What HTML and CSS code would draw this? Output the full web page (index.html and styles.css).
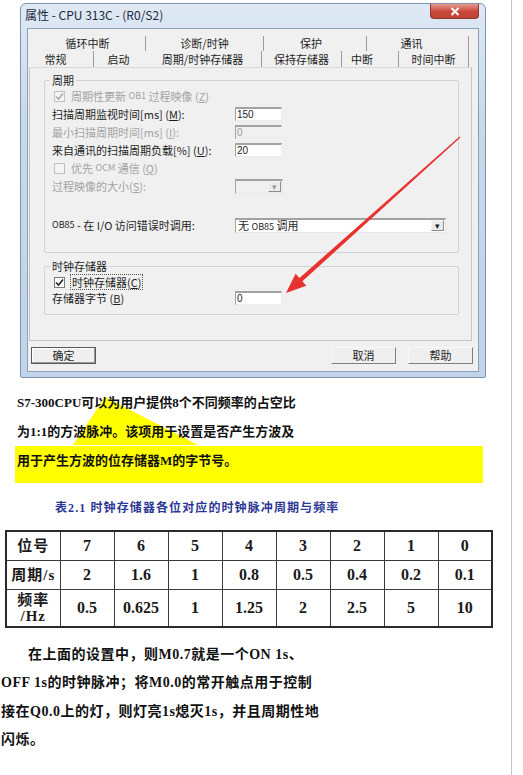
FILE: index.html
```html
<!DOCTYPE html>
<html lang="zh-CN">
<head>
<meta charset="utf-8">
<link rel="stylesheet" href="styles.css">
</head>
<body>
<div class="page">
  <div class="dialog">
    <div class="titlebar">
      <span class="title">属性 - CPU 313C - (R0/S2)</span>
      <span class="close"><svg width="10" height="9" viewBox="0 0 10 9"><path d="M1.5 1 L8.5 8 M8.5 1 L1.5 8" stroke="#fff" stroke-width="2"/></svg></span>
    </div>
    <div class="client">
      <div class="tabs">
        <div class="tabrow">
          <span class="tab w116">循环中断</span>
          <span class="tab w118">诊断/时钟</span>
          <span class="tab w103 pr8">保护</span>
          <span class="tab w102 pr12">通讯</span>
        </div>
        <div class="tabrow">
          <span class="tab w64 pr12">常规</span>
          <span class="tab w50 nosep">启动</span>
          <span class="tab w118">周期/时钟存储器</span>
          <span class="tab w80">保持存储器</span>
          <span class="tab w57 pr16">中断</span>
          <span class="tab w70">时间中断</span>
        </div>
      </div>
      <div class="panel">
        <div class="group g1">
          <span class="legend">周期</span>
          <div class="row"><span class="label dis"><span class="cb cb-dis"><svg width="9" height="9" viewBox="0 0 9 9"><path d="M1 4.5 L3.5 7 L8 1.5" fill="none" stroke="#a8a8a8" stroke-width="1.6"/></svg></span>周期性更新 <span class="small">OB1</span> 过程映像 (<u>Z</u>)</span></div>
          <div class="row"><span class="label">扫描周期监视时间[ms] (<u>M</u>):</span><span class="input">150</span></div>
          <div class="row"><span class="label dis">最小扫描周期时间[ms] (<u>I</u>):</span><span class="input input-dis">0</span></div>
          <div class="row"><span class="label">来自通讯的扫描周期负载[%] (<u>U</u>):</span><span class="input">20</span></div>
          <div class="row"><span class="label dis"><span class="cb cb-dis"></span>优先 <span class="small">OCM</span> 通信 (<u>Q</u>)</span></div>
          <div class="row"><span class="label dis">过程映像的大小(<u>S</u>):</span><span class="select select-dis"><span class="sel-text"></span><span class="sel-btn">▾</span></span></div>
          <div class="row row-ob85"><span class="label"><span class="small">OB85</span>&nbsp;- 在 I/O 访问错误时调用:</span><span class="select select-wide"><span class="sel-text">无 <span class="small">OB85</span> 调用</span><span class="sel-btn">▾</span></span></div>
        </div>
        <div class="group g2">
          <span class="legend">时钟存储器</span>
          <div class="row row16"><span class="label"><span class="cb"><svg width="9" height="9" viewBox="0 0 9 9"><path d="M1 4.5 L3.5 7 L8 1.5" fill="none" stroke="#222" stroke-width="1.6"/></svg></span><span class="focus">时钟存储器(<u>C</u>)</span></span></div>
          <div class="row row16"><span class="label">存储器字节 (<u>B</u>)</span><span class="input">0</span></div>
        </div>
      </div>
      <div class="buttons">
        <span class="btn btn-default">确定</span>
        <span class="spacer"></span>
        <span class="btn">取消</span>
        <span class="btn">帮助</span>
      </div>
    </div>
  </div>

  <svg class="arrow" width="523" height="320" viewBox="0 0 523 320">
    <polygon points="460.4,137.45 302.41,281.32 306.27,285.66 286,293 295.61,273.70 299.47,278.04 459.6,136.55" fill="#e8322f"/>
  </svg>

  <div class="desc">
    <div class="callout"></div>
    <div class="line">S7-300CPU可以为用户提供8个不同频率的占空比</div>
    <div class="line">为1:1的方波脉冲。该项用于设置是否产生方波及</div>
    <div class="line hl">用于产生方波的位存储器M的字节号。</div>
  </div>

  <div class="caption">表2.1 时钟存储器各位对应的时钟脉冲周期与频率</div>

  <table class="clock">
    <tr><th>位号</th><td>7</td><td>6</td><td>5</td><td>4</td><td>3</td><td>2</td><td>1</td><td>0</td></tr>
    <tr><th>周期/s</th><td>2</td><td>1.6</td><td>1</td><td>0.8</td><td>0.5</td><td>0.4</td><td>0.2</td><td>0.1</td></tr>
    <tr class="tall"><th>频率<br>/Hz</th><td>0.5</td><td>0.625</td><td>1</td><td>1.25</td><td>2</td><td>2.5</td><td>5</td><td>10</td></tr>
  </table>

  <div class="para">
    <div class="pline first">在上面的设置中，则M0.7就是一个ON 1s、</div>
    <div class="pline">OFF 1s的时钟脉冲；将M0.0的常开触点用于控制</div>
    <div class="pline">接在Q0.0上的灯，则灯亮1s熄灭1s，并且周期性地</div>
    <div class="pline">闪烁。</div>
  </div>
</div>
</body>
</html>
```

FILE: styles.css
```css
html, body {
  margin: 0;
  padding: 0;
  background: #ffffff;
}

.page {
  position: relative;
  width: 511px;
  height: 775px;
  border-right: 1px solid #c6c6c6;
  overflow: hidden;
}

/* ---------- dialog ---------- */
.dialog {
  margin: 3px 0 0 20px;
  width: 466px;
  height: 375px;
  box-sizing: border-box;
  border: 1px solid #8193ab;
  border-radius: 6px 6px 2px 2px;
  background: linear-gradient(#dfe9f5, #c9d9ec 30%, #c2d4ea);
  padding: 0 6px 5px 6px;
  display: flex;
  flex-direction: column;
  font-family: "Noto Sans CJK SC", "Noto Sans", sans-serif;
  color: #1e1e1e;
}

.titlebar {
  height: 24px;
  margin: 0 -6px;
  padding: 0 6px 0 4px;
  display: flex;
  justify-content: space-between;
  align-items: flex-start;
}

.title {
  font-size: 12px;
  line-height: 22px;
  color: #1a2a3a;
}

.close {
  width: 49px;
  height: 15px;
  background: linear-gradient(#e49a8e, #c9463a 55%, #c04437);
  border: 1px solid #8a3a32;
  border-top: none;
  border-radius: 0 0 4px 4px;
  display: flex;
  align-items: center;
  justify-content: center;
  box-sizing: border-box;
}

.client {
  flex: 1;
  background: #f0f0f0;
  border: 1px solid #8fa0b6;
  display: flex;
  flex-direction: column;
  font-size: 11px;
}

.tabs {
  padding-top: 7px;
  margin-left: 2px;
}

.tabrow {
  display: flex;
}

.tabrow:first-child .tab {
  height: 15px;
  line-height: 15px;
}

.tabrow .tab {
  height: 16px;
  line-height: 16px;
  box-sizing: border-box;
  text-align: center;
  border-right: 1px solid #9d9d9d;
  white-space: nowrap;
}

.tab.nosep { border-right-color: transparent; }
.w116 { width: 116px; }
.w118 { width: 118px; }
.w103 { width: 103px; }
.w102 { width: 102px; }
.w64 { width: 64px; }
.w50 { width: 50px; }
.w80 { width: 80px; }
.w57 { width: 57px; }
.w70 { width: 70px; }
.pr8 { padding-right: 8px; }
.pr12 { padding-right: 12px; }
.pr16 { padding-right: 16px; }

.panel {
  margin-left: 1px;
  width: 443px;
  height: 274px;
  box-sizing: border-box;
  border: 1px solid #c4c4c4;
  border-top-color: #d8d8d8;
  padding: 12px 12px 0 14px;
}

.group {
  position: relative;
  border: 1px solid #d0d4d8;
  border-radius: 2px;
  padding-left: 7px;
}

.g1 {
  padding-top: 6px;
  padding-bottom: 18px;
}

.g2 {
  margin-top: 13px;
  padding-top: 7px;
  padding-bottom: 8px;
}

.legend {
  position: absolute;
  top: -9px;
  left: 5px;
  padding: 0 2px;
  background: #f0f0f0;
  line-height: 16px;
}

.row {
  height: 18px;
  display: grid;
  grid-template-columns: 183px auto;
  align-items: center;
}

.row16 { height: 16px; }
.row-ob85 { margin-top: 21px; }

.label {
  display: flex;
  align-items: center;
  white-space: pre;
  line-height: 14px;
}

.small { font-size: 9px; }

.label u { text-decoration: underline; }
.dis { color: #a3a3a3; }

.cb {
  width: 11px;
  height: 11px;
  box-sizing: border-box;
  border: 1px solid #7c7c7c;
  background: #ffffff;
  margin: 0 6px 0 2px;
  display: inline-flex;
  align-items: center;
  justify-content: center;
}

.cb-dis {
  border-color: #c0c0c0;
  background: #f4f4f4;
}

.focus {
  outline: 1px dotted #555;
  outline-offset: 0;
  padding: 0 1px;
}

.input {
  width: 47px;
  height: 14px;
  box-sizing: border-box;
  background: #ffffff;
  border-top: 2px solid #a2a2a2;
  border-left: 1px solid #a2a2a2;
  border-right: 1px solid #ececec;
  border-bottom: 1px solid #ececec;
  font-size: 10px;
  line-height: 11px;
  padding-left: 1px;
  color: #222;
  font-family: "Liberation Sans", sans-serif;
}

.input-dis {
  background: #f0f0f0;
  color: #9a9a9a;
}

.select {
  height: 15px;
  box-sizing: border-box;
  border-top: 2px solid #a2a2a2;
  border-left: 1px solid #a2a2a2;
  border-right: 1px solid #e8e8e8;
  border-bottom: 1px solid #e8e8e8;
  background: #ffffff;
  display: flex;
  align-items: center;
}

.select-dis {
  width: 48px;
  background: #f0f0f0;
}

.select-wide {
  width: 211px;
}

.sel-text {
  flex: 1;
  padding-left: 2px;
  line-height: 12px;
  white-space: nowrap;
}

.sel-btn {
  width: 13px;
  height: 11px;
  box-sizing: border-box;
  border: 1px solid #8a8a8a;
  border-top-color: #f6f6f6;
  border-left-color: #f6f6f6;
  background: #ececec;
  font-size: 9px;
  line-height: 9px;
  text-align: center;
  margin-right: 1px;
  color: #222;
}

.select-dis .sel-btn { color: #9a9a9a; }

.buttons {
  display: flex;
  margin: 6px 5px 0 3px;
  gap: 12px;
}

.spacer { flex: 1; }

.btn {
  width: 65px;
  height: 17px;
  box-sizing: border-box;
  border: 1px solid;
  border-color: #f8f8f8 #7e7e7e #7e7e7e #f8f8f8;
  text-align: center;
  line-height: 15px;
  background: #efefef;
}

.btn-default {
  border: 1px solid #5a5a5a;
  box-shadow: inset -1px -1px 0 #9a9a9a, inset 1px 1px 0 #ffffff;
}

/* ---------- annotation arrow ---------- */
.arrow {
  position: absolute;
  left: 0;
  top: 0;
  pointer-events: none;
}

/* ---------- text ---------- */
.desc {
  position: relative;
  margin-top: 10px;
  padding-left: 17px;
  font-family: "Liberation Serif", "Noto Sans CJK SC", serif;
  font-weight: 700;
  font-size: 13px;
  color: #111;
}

.line {
  position: relative;
  height: 29px;
  line-height: 29px;
  white-space: nowrap;
}

.line.hl {
  margin-left: -2px;
  padding-left: 2px;
  width: 466px;
  height: 30px;
  line-height: 30px;
  padding-bottom: 7px;
  background: #ffff00;
}

.callout {
  position: absolute;
  left: 0;
  top: 0;
  width: 523px;
  height: 100px;
  background: #ffff00;
  clip-path: polygon(105px 9px, 73px 57px, 198px 57px);
}

.caption {
  margin: 15px 0 0 55px;
  font-family: "Liberation Serif", "Noto Sans CJK SC", serif;
  font-weight: 700;
  font-size: 12px;
  letter-spacing: 1.1px;
  line-height: 20px;
  color: #2c3796;
  white-space: nowrap;
}

.clock {
  margin: 12px 0 0 5px;
  width: 488px;
  table-layout: fixed;
  border-collapse: collapse;
  border: 2px solid #2a2a2a;
  font-family: "Liberation Serif", "Noto Sans CJK SC", serif;
  font-weight: 700;
  font-size: 16px;
  color: #1a1a1a;
}

.clock th, .clock td {
  border: 1px solid #3a3a3a;
  text-align: center;
  padding: 0;
  height: 28px;
  line-height: 18px;
}

.clock th {
  font-size: 15px;
  letter-spacing: 1px;
}

.clock tr.tall th, .clock tr.tall td {
  height: 36px;
}

.clock tr.tall th {
  line-height: 16px;
}

.para {
  margin: 13px 0 0 1px;
  font-family: "Liberation Serif", "Noto Sans CJK SC", serif;
  font-weight: 700;
  font-size: 14px;
  letter-spacing: 0.5px;
  color: #111;
}

.pline {
  height: 28.3px;
  line-height: 28.3px;
  white-space: nowrap;
}

.pline.first {
  text-indent: 27px;
}
```
